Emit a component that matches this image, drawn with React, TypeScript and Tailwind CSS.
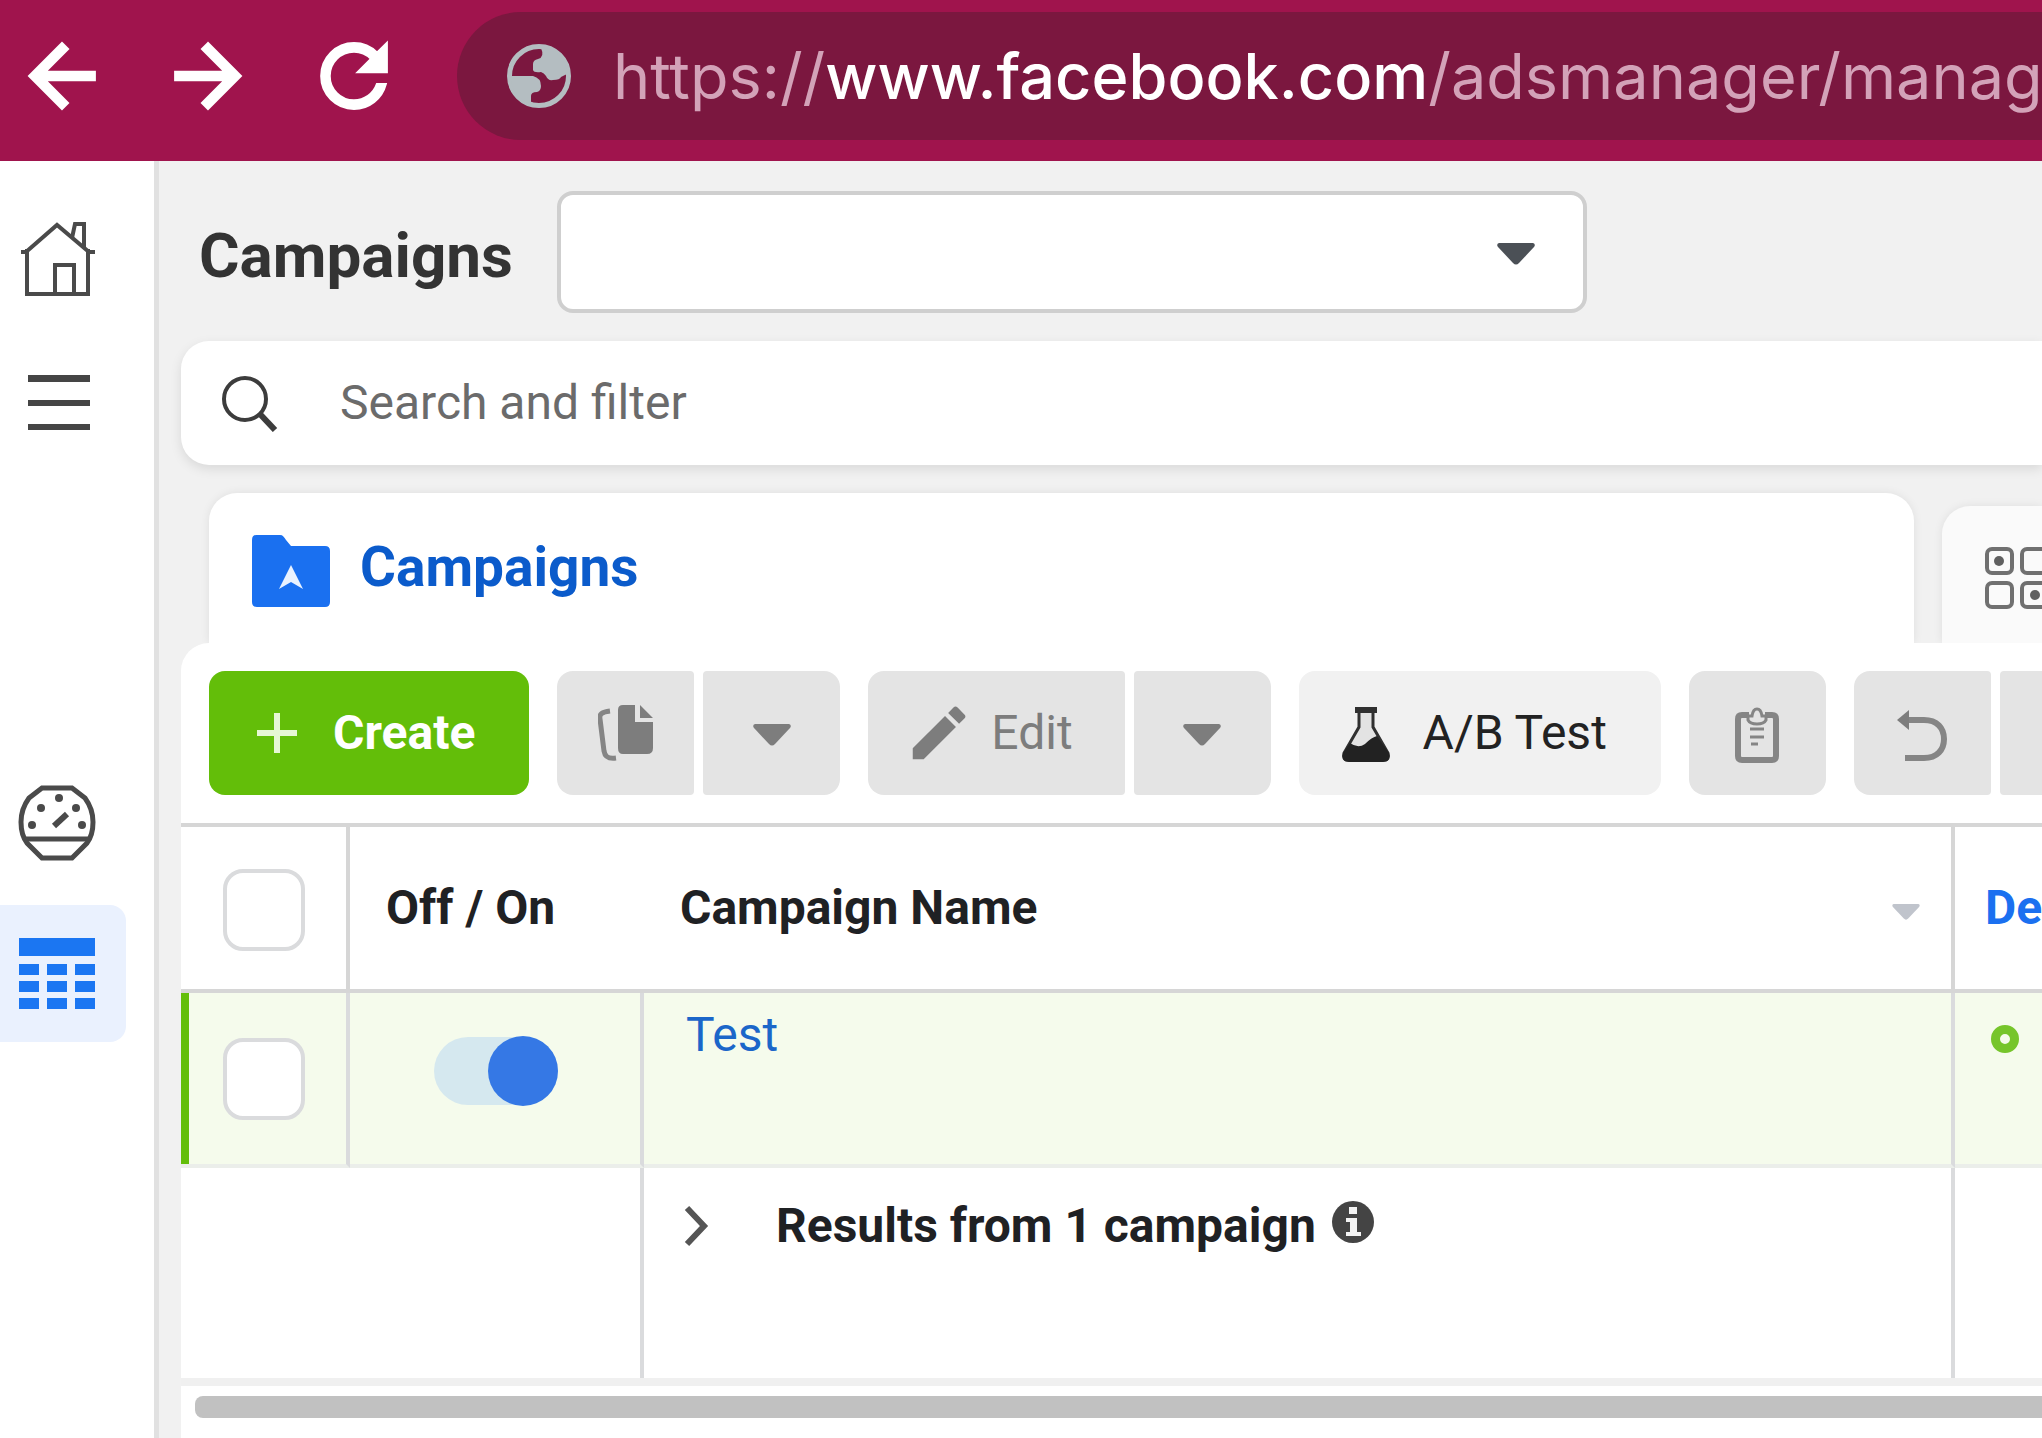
import React, { useState } from 'react';
import { MdArrowBack, MdArrowForward, MdRefresh, MdEdit } from 'react-icons/md';

type IconProps = { className?: string };

function GlobeIcon({ className }: IconProps) {
  return (
    <svg viewBox="0 0 64 64" className={className} aria-hidden>
      <circle cx="32" cy="32" r="29.5" fill="none" stroke="#b4bdc1" strokeWidth="5" />
      <path d="M34 4 Q38 13 31 15 Q26 16 26 20 V26 Q27 29 34 28 Q37 29 39 32 Q41 37 46 36 Q53 36 54 33 L60 30 C60 15 48 4 34 4 Z" fill="#b4bdc1" />
      <path d="M4 32 H26 Q34 34 34 42 Q34 47 30 48 Q24 48 24 52 V59 C12 56 4 46 4 32 Z" fill="#b4bdc1" />
    </svg>
  );
}

function HomeIcon({ className }: IconProps) {
  return (
    <svg viewBox="0 0 76 76" className={className} fill="none" stroke="#4a4a4a" strokeWidth="4" aria-hidden>
      <path d="M1 31 H6 L37 4 L69 31 H75" />
      <path d="M7 28 V73 H68 V28" />
      <path d="M52 17 L55 3 H64 V26" />
      <path d="M35 73 V44 H54 V73" />
    </svg>
  );
}

function MenuIcon({ className }: IconProps) {
  return (
    <svg viewBox="0 0 62 60" className={className} fill="#454545" aria-hidden>
      <path d="M0 1 H62 V8 H0 Z M0 26 H62 V32 H0 Z M0 50 H62 V56 H0 Z" />
    </svg>
  );
}

function GaugeIcon({ className }: IconProps) {
  return (
    <svg viewBox="0 0 78 78" className={className} fill="none" stroke="#4a4a4a" strokeWidth="5" aria-hidden>
      <path d="M24 4 H54 L67 14 Q75 25 75 38 Q75 51 69 59 L54 74 H24 L9 59 Q3 51 3 38 Q3 25 11 14 Z" />
      <path d="M6 55 H72" />
      <path d="M36 42 L49 30" strokeWidth="6" />
      <g fill="#4a4a4a" stroke="none">
        <circle cx="14" cy="41" r="4" />
        <circle cx="23" cy="24" r="4" />
        <circle cx="41" cy="14" r="4" />
        <circle cx="58" cy="24" r="4" />
        <circle cx="64" cy="41" r="4" />
      </g>
    </svg>
  );
}

function TableIcon({ className }: IconProps) {
  return (
    <svg viewBox="0 0 76 72" className={className} fill="#1b76f2" aria-hidden>
      <path d="M0 0 H76 V18 H0 Z" />
      {[26, 43, 60].map((y) =>
        [0, 28, 56].map((x) => <rect key={`${x}-${y}`} x={x} y={y} width="20" height="11" />)
      )}
    </svg>
  );
}

function SearchIcon({ className }: IconProps) {
  return (
    <svg viewBox="0 0 58 58" className={className} fill="none" stroke="#3c3c3c" aria-hidden>
      <circle cx="24" cy="25" r="21" strokeWidth="4" />
      <path d="M38 39 L54 56" strokeWidth="6" />
    </svg>
  );
}

function FolderIcon({ className }: IconProps) {
  return (
    <svg viewBox="0 0 78 72" className={className} aria-hidden>
      <path d="M4 0 H28 C31 0 32 2 34 5 L39 11 H73 Q78 11 78 16 V67 Q78 72 73 72 H5 Q0 72 0 67 V5 Q0 0 4 0 Z" fill="#1a70f0" />
      <path d="M39 30 L51 54 L39 47 L27 54 Z" fill="#e9f2ff" />
    </svg>
  );
}

function AdSetsIcon({ className }: IconProps) {
  return (
    <svg viewBox="0 0 68 64" className={className} fill="none" stroke="#707070" strokeWidth="4" aria-hidden>
      <rect x="3" y="3" width="25" height="24" rx="5" />
      <rect x="38" y="3" width="25" height="24" rx="5" />
      <rect x="3" y="37" width="25" height="24" rx="5" />
      <rect x="38" y="37" width="25" height="24" rx="5" />
      <g fill="#606060" stroke="none">
        <circle cx="15" cy="15" r="5" />
        <circle cx="51" cy="49" r="5" />
      </g>
    </svg>
  );
}

function CopyIcon({ className }: IconProps) {
  return (
    <svg viewBox="0 0 56 56" className={className} aria-hidden>
      <path d="M12 6 C4 7 1 9 2 14 L6 46 C7 52 10 54 18 53" fill="none" stroke="#858585" strokeWidth="5" />
      <path d="M25 0 H37 V17 H55 V43 Q55 49 49 49 H25 Q20 49 20 43 V5 Q20 0 25 0 Z M42 0 L55 13 H42 Z" fill="#7d7d7d" />
    </svg>
  );
}

function FlaskIcon({ className }: IconProps) {
  return (
    <svg viewBox="0 0 50 56" className={className} aria-hidden>
      <path d="M18 3 V20 L3 46 Q1 53 7 53 H43 Q49 53 47 46 L32 20 V3" fill="#e3e3e3" stroke="#303030" strokeWidth="3" />
      <path d="M14 3 H36" stroke="#303030" strokeWidth="6" />
      <path d="M9 36 Q17 42 24 37 Q31 30 36 29 L48 46 Q50 55 42 55 H8 Q0 55 2 46 Z" fill="#222" />
    </svg>
  );
}

function ClipboardIcon({ className }: IconProps) {
  return (
    <svg viewBox="0 0 44 56" className={className} fill="none" stroke="#858585" aria-hidden>
      <path d="M14 8 H7 Q3 8 3 12 V49 Q3 53 7 53 H37 Q41 53 41 49 V12 Q41 8 37 8 H30" strokeWidth="6" />
      <path d="M13 9 H17 Q18 2 22 2 Q26 2 27 9 H31 V13 Q29 17 22 17 Q15 17 13 13 Z" fill="#e4e4e4" strokeWidth="3" />
      <path d="M15 22 H29 M15 30 H29 M16 37 H23" strokeWidth="3" />
    </svg>
  );
}

function UndoIcon({ className }: IconProps) {
  return (
    <svg viewBox="0 0 50 60" className={className} fill="none" stroke="#858585" strokeWidth="6" aria-hidden>
      <path d="M6 17 H27 C40 17 47 25 47 36 C47 47 40 55 27 55 H8" />
      <path d="M12 7 V27 L0 17 Z" fill="#7d7d7d" stroke="none" />
    </svg>
  );
}

function Caret({ className }: IconProps) {
  return (
    <svg viewBox="0 0 38 22" className={className} fill="currentColor" aria-hidden>
      <path d="M2 0 H36 Q39 1 37 4 L22 20 Q19 23 16 20 L1 4 Q-1 1 2 0 Z" />
    </svg>
  );
}

const toolButton = 'flex h-31 shrink-0 items-center justify-center bg-[#e4e4e4] text-[#7d7d7d]';
const checkbox =
  'block size-[82px] appearance-none rounded-[20px] border-4 border-[#dadbdd] bg-white checked:bg-[#1a70f0]';

function BrowserBar() {
  return (
    <header className="flex h-[161px] items-center overflow-hidden bg-[#a0144d] pb-[10px] pl-[13px] text-white">
      <nav aria-label="Browser" className="mr-[54px] flex shrink-0 gap-12 [&_path:last-child]:stroke-current [&_path:last-child]:stroke-[0.6]">
        <button aria-label="Back"><MdArrowBack size={98} /></button>
        <button aria-label="Forward"><MdArrowForward size={98} /></button>
        <button aria-label="Reload"><MdRefresh size={98} /></button>
      </nav>
      <div className="flex h-32 flex-1 items-center overflow-hidden rounded-l-full bg-[#7b173f] pl-[50px]">
        <GlobeIcon className="mr-[42px] size-16 shrink-0" />
        <p className="font-['Inter'] text-[63px] leading-20 whitespace-nowrap text-[#d3a2b8]">
          https://<span className="font-medium text-white">www.facebook.com</span>/adsmanager/manage
        </p>
      </div>
    </header>
  );
}

function Sidebar() {
  return (
    <nav aria-label="Main" className="flex w-[159px] shrink-0 flex-col border-r-5 border-[#e1e1e1] bg-white pt-[60px]">
      <a href="#home" aria-label="Home" className="pl-5"><HomeIcon className="size-19" /></a>
      <button aria-label="Menu" className="mt-[77px] pl-7"><MenuIcon className="h-15 w-[62px]" /></button>
      <a href="#overview" aria-label="Account overview" className="mt-[350px] pl-[18px]">
        <GaugeIcon className="size-[78px]" />
      </a>
      <a href="#campaigns" aria-label="Campaigns" className="mt-[43px] mr-7 flex h-[137px] items-center rounded-r-2xl bg-[#eaf1fe] pl-[19px]">
        <TableIcon className="h-[72px] w-19" />
      </a>
    </nav>
  );
}

function Toolbar() {
  return (
    <div className="flex gap-7 overflow-hidden px-7 py-7 text-[48px] leading-15">
      <button className="flex h-31 shrink-0 items-center gap-9 rounded-2xl bg-[#63be09] pr-[54px] pl-12 font-bold text-white">
        <svg viewBox="0 0 40 40" className="size-10" stroke="#e6f7d4" strokeWidth="6" aria-hidden>
          <path d="M20 0 V40 M0 20 H40" />
        </svg>
        Create
      </button>
      <div className="flex shrink-0 gap-[9px]">
        <button aria-label="Duplicate" className={`${toolButton} w-[137px] rounded-l-2xl rounded-r-sm`}>
          <CopyIcon className="size-14" />
        </button>
        <button aria-label="Duplicate options" className={`${toolButton} w-[137px] rounded-l-sm rounded-r-2xl`}>
          <Caret className="mt-1 h-[22px] w-[38px]" />
        </button>
      </div>
      <div className="flex shrink-0 gap-[9px]">
        <button className={`${toolButton} gap-[17px] rounded-l-2xl rounded-r-sm pr-[52px] pl-9`}>
          <MdEdit size={70} />
          Edit
        </button>
        <button aria-label="Edit options" className={`${toolButton} w-[137px] rounded-l-sm rounded-r-2xl`}>
          <Caret className="mt-1 h-[22px] w-[38px]" />
        </button>
      </div>
      <button className="flex h-31 shrink-0 items-center gap-8 rounded-2xl bg-[#f1f1f1] pr-[54px] pl-[42px] text-[#222]">
        <FlaskIcon className="mt-1 h-14 w-[50px]" />
        A/B Test
      </button>
      <button aria-label="Paste" className={`${toolButton} w-[137px] rounded-2xl`}>
        <ClipboardIcon className="mt-1 h-14 w-11" />
      </button>
      <div className="flex shrink-0 gap-[9px]">
        <button aria-label="Undo" className={`${toolButton} w-[137px] rounded-l-2xl rounded-r-sm`}>
          <UndoIcon className="h-15 w-[50px]" />
        </button>
        <button aria-label="Discard" className={`${toolButton} w-[137px] rounded-l-sm rounded-r-2xl`} />
      </div>
    </div>
  );
}

function CampaignTable() {
  const [on, setOn] = useState(true);

  return (
    <table className="w-full table-fixed border-separate border-spacing-0 border-t-4 border-[#d6d6d6] text-left text-[48px] leading-15 text-[#1f2124]">
      <colgroup>
        <col className="w-[169px]" />
        <col className="w-[294px]" />
        <col />
        <col className="w-[87px]" />
      </colgroup>
      <thead>
        <tr className="h-[166px] [&>th]:border-b-4 [&>th]:border-[#d6d6d6]">
          <th className="border-r-4 p-0 pt-1 pl-[42px]">
            <input type="checkbox" aria-label="Select all campaigns" className={checkbox} />
          </th>
          <th className="p-0 pl-9 whitespace-nowrap">Off / On</th>
          <th className="border-r-4 p-0 pr-[30px] pl-9">
            <div className="flex items-center justify-between">
              Campaign Name
              <Caret className="mt-2 h-4 w-[30px] text-[#c0c4cc]" />
            </div>
          </th>
          <th className="overflow-hidden p-0 pl-[30px] whitespace-nowrap text-[#1b70f0]">Delivery</th>
        </tr>
      </thead>
      <tbody>
        <tr className="h-[175px] bg-[#f5fbec] [&>td]:border-b-4 [&>td]:border-b-[#ebeeea]">
          <td className="border-r-4 border-r-[#dadbdd] p-0 pl-[42px] shadow-[inset_8px_0_0_#63be09]">
            <input type="checkbox" aria-label="Select Test" className={checkbox} />
          </td>
          <td className="border-r-4 border-r-[#dadbdd] p-0 pb-4 pl-[84px]">
            <button
              role="switch"
              aria-checked={on}
              aria-label="Turn Test on or off"
              onClick={() => setOn(!on)}
              className="flex h-[68px] w-[124px] items-center justify-end rounded-full bg-[#d5e8ef]"
            >
              <span className="size-[70px] shrink-0 rounded-full bg-[#3578e5]" />
            </button>
          </td>
          <td className="border-r-4 border-r-[#dadbdd] p-0 pt-3 pl-[42px] align-top">
            <a href="#test" className="text-[#1b66c9]">Test</a>
          </td>
          <td className="p-0 pt-8 pl-9 align-top">
            <span role="img" aria-label="Active" className="block size-7 rounded-full border-9 border-[#76c52b]" />
          </td>
        </tr>
        <tr className="h-[210px]">
          <td colSpan={2} className="border-r-4 border-[#dadbdd] p-0" />
          <td className="border-r-4 border-[#dadbdd] p-0 pt-7 pl-10 align-top">
            <div className="flex items-center font-bold">
              <button aria-label="Expand results" className="mr-[66px]">
                <svg viewBox="0 0 26 42" className="h-[42px] w-[26px]" fill="none" stroke="#555" strokeWidth="6" aria-hidden>
                  <path d="M3 3 L20 21 L3 39" />
                </svg>
              </button>
              <span className="mr-4 whitespace-nowrap">Results from 1 campaign</span>
              <svg viewBox="0 0 42 42" className="mb-2 size-[42px]" role="img" aria-label="Info">
                <circle cx="21" cy="21" r="21" fill="#444" />
                <path d="M17 6 H25 V13 H17 Z M14 17 H25 V31 H29 V35 H14 V31 H18 V21 H14 Z" fill="#f3f3f3" />
              </svg>
            </div>
          </td>
          <td className="p-0" />
        </tr>
      </tbody>
    </table>
  );
}

export default function App() {
  return (
    <div className="flex min-h-screen flex-col overflow-hidden bg-[#f1f1f1] font-['Roboto',sans-serif]">
      <BrowserBar />
      <div className="flex flex-1">
        <Sidebar />
        <main className="flex min-w-0 flex-1 flex-col pl-[22px]">
          <div className="flex items-center gap-11 pt-[30px] pl-[18px]">
            <h1 className="pt-2 text-[62px] leading-18 font-bold text-[#333]">Campaigns</h1>
            <div className="relative">
              <select aria-label="Account" className="block h-[122px] w-[1030px] appearance-none rounded-2xl border-4 border-[#cfcfcf] bg-white px-6" />
              <Caret className="pointer-events-none absolute top-13 right-13 h-[22px] w-[38px] text-[#4b5056]" />
            </div>
          </div>

          <label className="mt-7 flex h-31 items-center rounded-l-[28px] bg-white pl-10 shadow-[0_4px_12px_rgba(0,0,0,0.1)]">
            <SearchIcon className="mr-[61px] size-[58px]" />
            <input
              type="search"
              aria-label="Search and filter"
              placeholder="Search and filter"
              className="flex-1 text-[48px] leading-15 outline-none placeholder:text-[#6b6b6b]"
            />
          </label>

          <div role="tablist" className="mt-7 flex items-end gap-7 pl-7">
            <button
              role="tab"
              aria-selected="true"
              className="flex h-[150px] flex-1 items-start gap-[30px] rounded-t-[28px] bg-white pt-[42px] pl-[43px] text-[55px] leading-16 font-bold text-[#0b5bcb] shadow-[0_0_10px_rgba(0,0,0,0.08)]"
            >
              <FolderIcon className="h-[72px] w-[78px]" />
              Campaigns
            </button>
            <button
              role="tab"
              aria-selected="false"
              aria-label="Ad sets"
              className="flex h-[137px] w-[100px] items-start overflow-hidden rounded-tl-[28px] bg-[#fafafa] pt-10 pl-[42px] shadow-[0_0_10px_rgba(0,0,0,0.08)]"
            >
              <AdSetsIcon className="h-16 w-17 shrink-0" />
            </button>
          </div>

          <section className="relative flex-1 rounded-tl-[28px] bg-white">
            <Toolbar />
            <CampaignTable />
            <div className="border-t-8 border-[#f0f0f0] pt-[10px] pl-[14px]">
              <div className="h-[22px] rounded-l-lg bg-[#c1c1c1]" />
            </div>
          </section>
        </main>
      </div>
    </div>
  );
}
